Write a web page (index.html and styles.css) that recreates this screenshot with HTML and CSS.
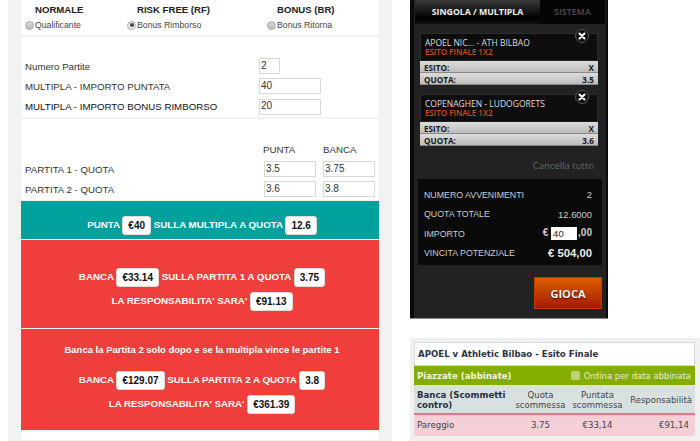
FILE: index.html
```html
<!DOCTYPE html>
<html lang="en">
<head>
    <meta charset="UTF-8">
    <title>Calcolatore Multipla</title>
    <link rel="stylesheet" href="styles.css">
</head>
<body>
    <div class="calc">
        <div class="card modes">
            <div class="mode mode-normal">
                <div class="mode-title">NORMALE</div>
                <label><span class="radio"></span>Qualificante</label>
            </div>
            <div class="mode mode-rf">
                <div class="mode-title">RISK FREE (RF)</div>
                <label><span class="radio checked"></span>Bonus Rimborso</label>
            </div>
            <div class="mode">
                <div class="mode-title">BONUS (BR)</div>
                <label><span class="radio"></span>Bonus Ritorna</label>
            </div>
        </div>

        <div class="card amounts">
            <div class="form-row"><span>Numero Partite</span><input class="in-small" value="2"></div>
            <div class="form-row"><span>MULTIPLA - IMPORTO PUNTATA</span><input class="in-wide" value="40"></div>
            <div class="form-row"><span class="dark">MULTIPLA - IMPORTO BONUS RIMBORSO</span><input class="in-wide" value="20"></div>
        </div>

        <div class="card odds">
            <div class="odds-row odds-head"><span></span><span>PUNTA</span><span>BANCA</span></div>
            <div class="odds-row"><span>PARTITA 1 - QUOTA</span><input value="3.5"><input value="3.75"></div>
            <div class="odds-row"><span>PARTITA 2 - QUOTA</span><input value="3.6"><input value="3.8"></div>
        </div>

        <div class="result teal">
            <p>PUNTA <b class="pill">€40</b> SULLA MULTIPLA A QUOTA <b class="pill">12.6</b></p>
        </div>
        <div class="result red first-lay">
            <p>BANCA <b class="pill">€33.14</b> SULLA PARTITA 1 A QUOTA <b class="pill">3.75</b></p>
            <p>LA RESPONSABILITA' SARA' <b class="pill">€91.13</b></p>
        </div>
        <div class="result red second-lay">
            <p class="note">Banca la Partita 2 solo dopo e se la multipla vince le partite 1</p>
            <p>BANCA <b class="pill">€129.07</b> SULLA PARTITA 2 A QUOTA <b class="pill">3.8</b></p>
            <p>LA RESPONSABILITA' SARA' <b class="pill">€361.39</b></p>
        </div>
        <div class="card tail"></div>
    </div>

    <div class="side">
        <div class="slip">
            <div class="tabs">
                <div class="tab active">SINGOLA / MULTIPLA</div>
                <div class="tab">SISTEMA</div>
            </div>

            <div class="bet">
                <div class="bet-head">
                    <div class="match">APOEL NIC... - ATH BILBAO</div>
                    <div class="market">ESITO FINALE 1X2</div>
                    <span class="close">
                        <svg width="8" height="8" viewBox="0 0 8 8"><path d="M1.5 1.5l5 5M6.5 1.5l-5 5" stroke="#fff" stroke-width="2" stroke-linecap="round"/></svg>
                    </span>
                </div>
                <div class="bet-line"><span>ESITO:</span><span>X</span></div>
                <div class="bet-line"><span>QUOTA:</span><span>3.5</span></div>
            </div>
            <div class="bet">
                <div class="bet-head">
                    <div class="match">COPENAGHEN - LUDOGORETS</div>
                    <div class="market">ESITO FINALE 1X2</div>
                    <span class="close">
                        <svg width="8" height="8" viewBox="0 0 8 8"><path d="M1.5 1.5l5 5M6.5 1.5l-5 5" stroke="#fff" stroke-width="2" stroke-linecap="round"/></svg>
                    </span>
                </div>
                <div class="bet-line"><span>ESITO:</span><span>X</span></div>
                <div class="bet-line"><span>QUOTA:</span><span>3.6</span></div>
            </div>

            <div class="clear-all">Cancella tutto</div>

            <div class="summary">
                <div class="sum-row"><span>NUMERO AVVENIMENTI</span><span>2</span></div>
                <div class="sum-row"><span>QUOTA TOTALE</span><span>12.6000</span></div>
                <div class="sum-row"><span>IMPORTO</span><span class="stake">€ <input value="40">,00</span></div>
                <div class="sum-row"><span>VINCITA POTENZIALE</span><span class="win">€ 504,00</span></div>
            </div>

            <div class="play-wrap"><button class="play">GIOCA</button></div>
        </div>

        <div class="matched">
            <div class="matched-title">APOEL v Athletic Bilbao - Esito Finale</div>
            <div class="matched-bar">
                <b>Piazzate (abbinate)</b>
                <span class="sort"><span class="check"></span>Ordina per data abbinata</span>
            </div>
            <table class="matched-table">
                <tr>
                    <th>Banca (Scommetti contro)</th>
                    <td class="col-quota">Quota scommessa</td>
                    <td class="col-stake">Puntata scommessa</td>
                    <td class="resp">Responsabilità</td>
                </tr>
                <tr class="lay-row">
                    <td>Pareggio</td>
                    <td>3.75</td>
                    <td>€33,14</td>
                    <td class="resp">€91,14</td>
                </tr>
            </table>
        </div>
    </div>
</body>
</html>
```

FILE: styles.css
```css
html, body {
    margin: 0;
    height: 441px;
    overflow: hidden;
    background-color: #fff;
}

body {
    display: flex;
    align-items: flex-start;
    font-family: "Liberation Sans", Arial, sans-serif;
    font-size: 9.7px;
    color: #333;
}

/* left calculator */
.calc {
    width: 358px;
    height: 441px;
    margin-left: 8px;
    padding: 0 13px;
    background-color: #f0f3f2;
    flex-shrink: 0;
}

.card {
    background-color: #fff;
    margin-bottom: 2px;
}

.modes {
    display: flex;
    height: 35px;
    padding-left: 4px;
    box-sizing: border-box;
}

.mode {
    padding-top: 5px;
}

.mode-normal {
    width: 102px;
}

.mode-rf {
    width: 140px;
}

.mode-title {
    font-weight: bold;
    font-size: 9.6px;
    line-height: 10px;
    margin-bottom: 4px;
    padding-left: 10px;
    color: #222;
}

.mode label {
    display: flex;
    align-items: center;
    font-size: 8.7px;
    line-height: 12px;
    color: #444;
}

.radio {
    width: 9px;
    height: 9px;
    margin-right: 1px;
    border-radius: 50%;
    border: 1px solid #aaa;
    box-sizing: border-box;
    background: linear-gradient(#d8d8d8, #bbb);
    position: relative;
}

.radio.checked {
    background: #eee;
}

.radio.checked::after {
    content: "";
    position: absolute;
    left: 1.5px;
    top: 1.5px;
    width: 4px;
    height: 4px;
    border-radius: 50%;
    background-color: #444;
}

.amounts {
    height: 80px;
    padding: 19px 0 0 4px;
    box-sizing: border-box;
}

.form-row {
    display: grid;
    grid-template-columns: 234px auto;
    justify-content: start;
    align-items: center;
    height: 20.3px;
}

.dark {
    color: #111;
}

input {
    font-family: "Liberation Sans", Arial, sans-serif;
    font-size: 10px;
    color: #333;
    box-sizing: border-box;
    height: 16px;
    padding: 0 0 2px 1px;
    margin: 0;
    border: 1px solid #d8d8d8;
    border-radius: 0;
    outline: none;
    background-color: #fff;
}

.in-small {
    width: 21px;
}

.in-wide {
    width: 62px;
}

.odds {
    height: 81px;
    margin-bottom: 1px;
    padding: 21px 0 0 4px;
    box-sizing: border-box;
}

.odds-row {
    display: grid;
    grid-template-columns: 232px 52px 52px;
    column-gap: 7px;
    align-items: center;
    height: 20.3px;
}

.odds-head {
    height: 19px;
}

.odds-head span:nth-child(2) {
    margin-left: -1px;
}

.result {
    margin-bottom: 1px;
    padding-left: 4px;
    text-align: center;
    color: #fff;
    font-weight: bold;
    font-size: 9.75px;
}

.result p {
    margin: 0;
    height: 24px;
    line-height: 24px;
}

.teal {
    height: 38px;
    padding-top: 12px;
    box-sizing: border-box;
    background-color: #00a19d;
}

.red {
    background-color: #ef3e3b;
    box-sizing: border-box;
}

.first-lay {
    height: 88px;
    padding-top: 25px;
}

.second-lay {
    height: 101px;
    padding-top: 14px;
}

.second-lay .note {
    height: 14px;
    line-height: 14px;
    margin-bottom: 11px;
    font-size: 9.5px;
}

.pill {
    display: inline-block;
    height: 19px;
    line-height: 18px;
    padding: 0 5px;
    box-sizing: border-box;
    border: 1px solid #e4d8d8;
    border-radius: 3px;
    background-color: #fff;
    color: #111;
    font-size: 10px;
    font-weight: bold;
    vertical-align: middle;
}

.tail {
    height: 8px;
    margin: 2px 0 0;
}

/* right column */
.side {
    width: 290px;
    margin-left: 18px;
    flex-shrink: 0;
}

.slip {
    width: 198px;
    height: 319px;
    box-sizing: border-box;
    padding: 0 3px 0 5px;
    background-color: #222;
    border-bottom: 1px solid #888;
    box-shadow: inset 4px 0 0 #0b0b0b, inset -2px 0 0 #0b0b0b;
    font-family: "Open Sans", "Liberation Sans", sans-serif;
    overflow: hidden;
}

.tabs {
    display: flex;
    height: 24px;
}

.tab {
    font-weight: bold;
    font-size: 8.75px;
    line-height: 25px;
    text-align: center;
    color: #444;
    background-color: #050505;
    flex: 1;
}

.tab.active {
    flex: none;
    width: 125px;
    color: #eee;
    background: linear-gradient(#3a3a3a, #000 75%, #111);
}

.bet {
    margin: 9px 5px 8px;
    width: 178px;
}

.bet-head {
    position: relative;
    height: 27px;
    padding: 4px 4px 0;
    box-sizing: border-box;
    background-color: #0d0d0d;
    border: 1px solid #2c2c2c;
    border-bottom: 0;
    margin-bottom: 1px;
}

.match {
    font-size: 8.5px;
    line-height: 9px;
    color: #ddd;
}

.market {
    font-size: 8px;
    line-height: 9px;
    color: #d8470f;
    font-weight: 600;
}

.close {
    position: absolute;
    right: 8px;
    top: -5px;
    width: 14px;
    height: 14px;
    box-sizing: border-box;
    display: flex;
    align-items: center;
    justify-content: center;
    border-radius: 50%;
    border: 1px solid #555;
    background-color: #111;
}

.bet-line {
    display: flex;
    justify-content: space-between;
    height: 12px;
    line-height: 13px;
    padding: 0 4px;
    box-sizing: border-box;
    font-size: 8.2px;
    font-weight: bold;
    color: #1a1a1a;
    background: linear-gradient(#dcdcdc, #bdbdbd);
    border-bottom: 1px solid #888;
}

.clear-all {
    margin: 13px 11px 0 0;
    text-align: right;
    font-size: 9.5px;
    line-height: 13px;
    color: #666;
}

.summary {
    margin: 7px 3px 0 3px;
    height: 86px;
    padding: 6px 10px 0 6px;
    box-sizing: border-box;
    background-color: #0a0a0a;
    font-family: "Liberation Sans", Arial, sans-serif;
    font-size: 8.8px;
    color: #ccc;
}

.sum-row {
    display: flex;
    justify-content: space-between;
    align-items: center;
    height: 19.5px;
}

.sum-row span:last-child {
    font-size: 9.4px;
}

.sum-row span.stake {
    font-weight: bold;
    font-size: 10px;
}

.stake input {
    width: 26px;
    height: 13px;
    margin-right: 1px;
    font-size: 9.5px;
    border: 0;
    padding: 0 0 0 2px;
    color: #222;
    vertical-align: middle;
}

.sum-row span.win {
    font-size: 11.3px;
    font-weight: bold;
    color: #e8e8e8;
}

.play-wrap {
    display: flex;
    justify-content: flex-end;
    margin: 12px 3px 0 0;
}

.play {
    width: 68px;
    height: 32px;
    padding: 0;
    border: 1px solid #c23a00;
    background: linear-gradient(#dc5f00, #a61a00);
    color: #f4f4f4;
    font-family: "Open Sans", "Liberation Sans", sans-serif;
    font-weight: bold;
    font-size: 11px;
    text-shadow: 0 1px 2px #400;
}

.matched {
    margin-top: 19px;
    height: 103px;
    padding: 4px 5px 0 4px;
    box-sizing: border-box;
    background-color: #f0f0f0;
    font-family: "DejaVu Sans", Verdana, sans-serif;
    font-size: 8.6px;
    color: #444;
}

.matched-title {
    height: 24px;
    line-height: 23px;
    padding-left: 3px;
    box-sizing: border-box;
    font-weight: bold;
    font-size: 8.6px;
    color: #2b3340;
    background-color: #fff;
    border: 1px solid #c8d8e4;
}

.matched-bar {
    display: flex;
    justify-content: space-between;
    align-items: center;
    height: 19px;
    padding: 0 4px 0 3px;
    background-color: #84ad00;
    color: #fff;
}

.matched-bar b {
    color: #f3f7de;
}

.sort {
    display: flex;
    align-items: center;
    color: #e9f1c8;
    font-size: 8.5px;
}

.check {
    width: 9px;
    height: 9px;
    margin-right: 4px;
    border-radius: 2px;
    background-color: #bcd27a;
}

.matched-table {
    width: 100%;
    border-collapse: collapse;
    table-layout: fixed;
}

.matched-table th {
    width: 91px;
    height: 27px;
    padding: 1px 3px 0;
    text-align: left;
    font-size: 8.6px;
    line-height: 10px;
    color: #273040;
    background-color: #d9e1e0;
}

.matched-table td {
    text-align: center;
    line-height: 10px;
    font-size: 8.5px;
    padding: 1px 0 0;
    background-color: #d9e1e0;
}

.matched-table .col-quota {
    width: 59px;
}

.matched-table .col-stake {
    width: 55px;
}

.matched-table td.resp {
    text-align: right;
    padding-right: 3px;
}

.matched-table .lay-row td {
    height: 20px;
    padding: 0 3px 1px;
    font-size: 8.6px;
    border-top: 2px solid #f0708c;
    background-color: #f4cfd8;
}

.matched-table .lay-row td.resp {
    padding-right: 6px;
}

.matched-table .lay-row td:first-child {
    text-align: left;
}
```
